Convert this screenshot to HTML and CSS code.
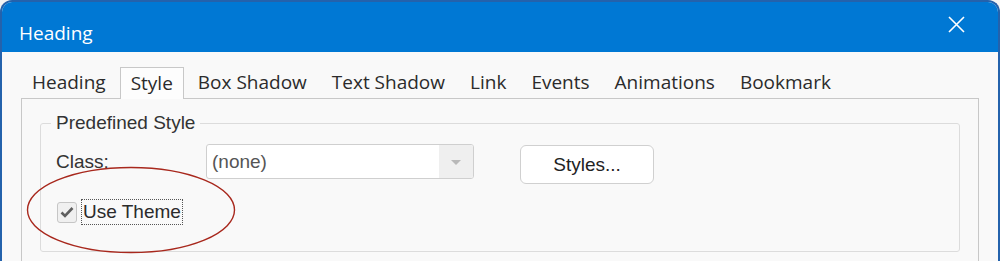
FILE: index.html
```html
<!DOCTYPE html>
<html lang="en">
<head>
    <meta charset="UTF-8">
    <meta name="viewport" content="width=device-width, initial-scale=1.0">
    <title>Heading</title>
    <link rel="stylesheet" href="styles.css">
</head>
<body>
    <div class="window">
        <div class="titlebar">
            <span class="title">Heading</span>
            <svg class="close" width="17" height="17" viewBox="0 0 17 17">
                <path d="M1 1 L16 16 M16 1 L1 16" stroke="#fff" stroke-width="1.6" fill="none"/>
            </svg>
        </div>
        <div class="content">
            <ul class="tabs">
                <li>Heading</li>
                <li class="active">Style</li>
                <li>Box Shadow</li>
                <li>Text Shadow</li>
                <li>Link</li>
                <li>Events</li>
                <li>Animations</li>
                <li>Bookmark</li>
            </ul>
            <div class="panel">
                <fieldset class="group">
                    <legend>Predefined Style</legend>
                    <div class="row">
                        <label class="label">Class:</label>
                        <div class="select">
                            <span class="select-value">(none)</span>
                            <span class="select-arrow"></span>
                        </div>
                        <button class="btn">Styles...</button>
                    </div>
                    <div class="check-row">
                        <span class="checkbox">
                            <svg width="14" height="12" viewBox="0 0 14 12">
                                <path d="M1.5 6.5 L5 10 L12.5 2" stroke="#5f5f5f" stroke-width="2.6" fill="none"/>
                            </svg>
                        </span>
                        <span class="check-label">Use Theme</span>
                    </div>
                    <svg class="mark" width="212" height="90" viewBox="0 0 212 90">
                        <ellipse cx="106" cy="45" rx="103.5" ry="42.5" stroke="#a8281d" stroke-width="1.4" fill="none"/>
                    </svg>
                </fieldset>
            </div>
        </div>
    </div>
</body>
</html>
```

FILE: styles.css
```css
body {
    margin: 0;
    background-color: #f3f3f3;
    font-family: "Liberation Sans", Arial, sans-serif;
    color: #333;
}

.window {
    height: 261px;
    box-sizing: border-box;
    border: 2px solid #2462ac;
    border-bottom: none;
    border-radius: 12px 12px 0 0;
    overflow: hidden;
    background-color: #f9f9f9;
}

.titlebar {
    height: 50px;
    background-color: #0078d4;
    display: flex;
    align-items: center;
    justify-content: space-between;
    padding: 0 33px 0 17px;
}

.title {
    color: white;
    font-family: "Open Sans", "Noto Sans", sans-serif;
    font-size: 19px;
    margin-top: 11px;
}

.close {
    margin-top: -6px;
}

.content {
    padding: 14px 19px 0 19px;
}

.tabs {
    list-style: none;
    margin: 0;
    padding: 0;
    display: flex;
    font-family: "Open Sans", "Noto Sans", sans-serif;
    font-size: 19px;
    color: #2b2b2b;
}

.tabs li {
    height: 31px;
    line-height: 31px;
    padding: 0 10px;
    border: 1px solid transparent;
    border-bottom: none;
    margin-right: 3px;
}

.tabs li.active {
    background-color: #fdfdfd;
    border-color: #c8c8c8;
    position: relative;
    top: 1px;
}

.panel {
    border: 1px solid #c8c8c8;
    border-bottom: none;
    height: 170px;
    padding: 13px 18px 0 18px;
}

.group {
    position: relative;
    margin: 0;
    height: 140px;
    box-sizing: border-box;
    border: 1px solid #dcdcdc;
    border-radius: 3px;
    padding: 0 15px;
}

.group legend {
    font-size: 19px;
    color: #333;
    padding: 0 5px;
    margin-left: -5px;
}

.row {
    display: flex;
    align-items: flex-start;
    margin-top: 10px;
}

.label {
    width: 150px;
    font-size: 19px;
    line-height: 22px;
    margin-top: 7px;
}

.select {
    width: 268px;
    height: 35px;
    box-sizing: border-box;
    border: 1px solid #cfcfcf;
    border-radius: 3px;
    background-color: white;
    display: flex;
    align-items: center;
    overflow: hidden;
}

.select-value {
    flex: 1;
    padding-left: 5px;
    font-size: 19px;
    color: #555;
}

.select-arrow {
    width: 34px;
    height: 100%;
    background-color: #efefef;
    position: relative;
}

.select-arrow::after {
    content: "";
    position: absolute;
    left: 12px;
    top: 15px;
    border-left: 5px solid transparent;
    border-right: 5px solid transparent;
    border-top: 5px solid #b8b8b8;
}

.btn {
    margin-left: 46px;
    margin-top: 1px;
    width: 134px;
    height: 39px;
    background-color: white;
    border: 1px solid #d0d0d0;
    border-radius: 6px;
    font-family: "Liberation Sans", Arial, sans-serif;
    font-size: 19px;
    color: #222;
}

.check-row {
    display: flex;
    align-items: center;
    margin-top: 15px;
    margin-left: 1px;
}

.checkbox {
    width: 20px;
    height: 21px;
    box-sizing: border-box;
    border: 1px solid #c6c6c6;
    border-radius: 3px;
    background-color: #f0f0f0;
    display: flex;
    align-items: center;
    justify-content: center;
}

.check-label {
    margin-left: 4px;
    padding: 1px 1px;
    border: 1px dotted #555;
    font-size: 19px;
    color: #2b2b2b;
    line-height: 22px;
}

.mark {
    position: absolute;
    left: -16px;
    top: 31px;
}
```
